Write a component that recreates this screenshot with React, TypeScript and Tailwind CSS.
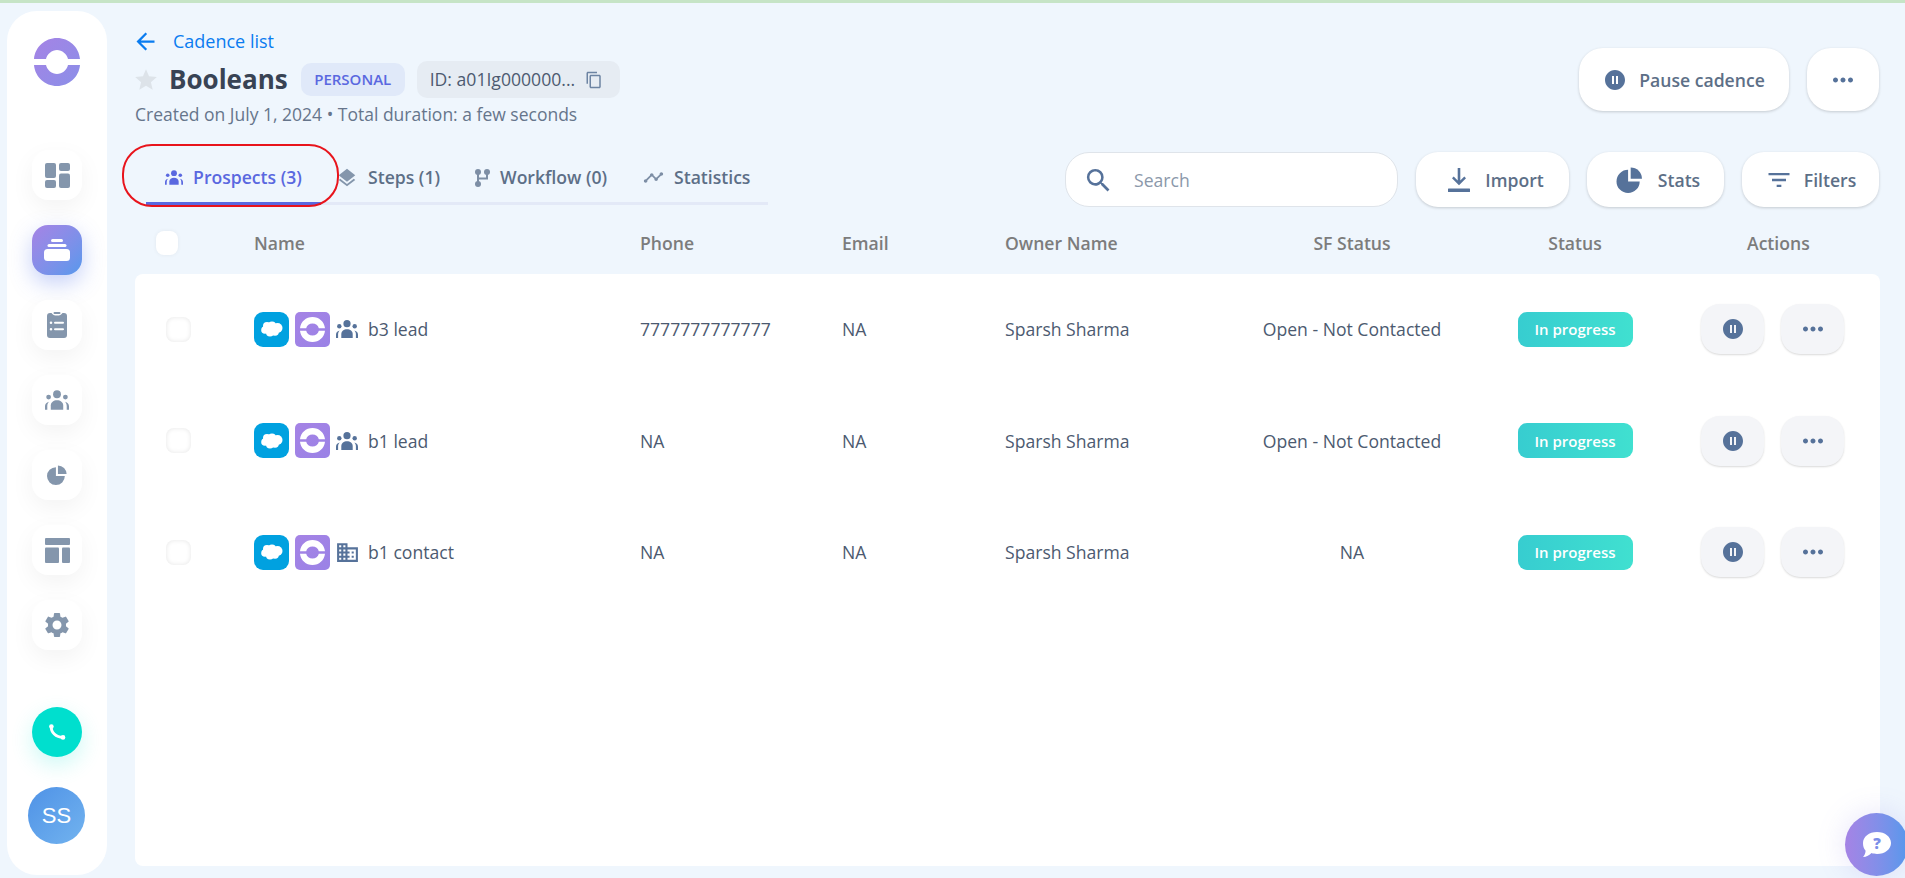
import type { ReactNode } from "react";
import {
  MdArrowBack,
  MdBusiness,
  MdContentCopy,
  MdFilterList,
  MdLayers,
  MdMoreHoriz,
  MdPauseCircleFilled,
  MdSearch,
  MdSettings,
  MdStar,
  MdTimeline,
} from "react-icons/md";

const tableCols = "grid grid-cols-[119px_386px_202px_163px_220px_254px_192px_209px]";

const prospects = [
  { name: "b3 lead", phone: "7777777777777", sfStatus: "Open - Not Contacted", type: "lead" },
  { name: "b1 lead", phone: "NA", sfStatus: "Open - Not Contacted", type: "lead" },
  { name: "b1 contact", phone: "NA", sfStatus: "NA", type: "contact" },
];

function Logo() {
  return (
    <svg width="46" height="48" viewBox="0 0 46 48">
      <defs>
        <linearGradient id="logoGrad" x1="0" y1="0" x2="1" y2="1">
          <stop offset="0" stopColor="#a583e5" />
          <stop offset="1" stopColor="#8b8fe8" />
        </linearGradient>
      </defs>
      <path
        fillRule="evenodd"
        fill="url(#logoGrad)"
        d="M0 21C1 9 11 0 23 0s22 9 23 21H34c-1-5-6-9-11-9s-10 4-11 9H0zM0 27h12c1 5 6 9 11 9s10-4 11-9h12c-1 12-11 21-23 21S1 39 0 27z"
      />
    </svg>
  );
}

function RowLogo() {
  return (
    <div className="flex h-[35px] w-[35px] items-center justify-center rounded-[5px] bg-linear-to-br from-[#a583e5] to-[#9a82e6]">
      <svg width="25" height="25" viewBox="0 0 25 25">
        <path
          fill="#fff"
          d="M0 11.300C.6 4.800 6 0 12.500 0S24.400 4.800 25 11.300h-6.200c-.6-2.800-3.200-4.800-6.300-4.800s-5.700 2-6.300 4.800H0zM0 13.700h6.200c.6 2.800 3.200 4.800 6.300 4.800s5.700-2 6.300-4.800H25C24.400 20.200 19 25 12.500 25S.6 20.200 0 13.700z"
        />
      </svg>
    </div>
  );
}

function SalesforceIcon() {
  return (
    <div className="flex h-[35px] w-[35px] items-center justify-center rounded-[9px] bg-[#00a1e0]">
      <svg width="22" height="16" viewBox="0 0 22 16" fill="#fff">
        <circle cx="6" cy="5" r="4" />
        <circle cx="11" cy="4.500" r="4" />
        <circle cx="16.500" cy="7" r="5" />
        <circle cx="4" cy="9" r="3.800" />
        <circle cx="9" cy="11.500" r="4" />
        <circle cx="14" cy="11" r="3.800" />
      </svg>
    </div>
  );
}

function PeopleIcon({ width, height, color }: { width: number; height: number; color: string }) {
  return (
    <svg width={width} height={height} viewBox="0 0 22 18" fill={color}>
      <circle cx="11" cy="3.700" r="3.600" />
      <circle cx="3.300" cy="6.300" r="2.200" />
      <circle cx="18.700" cy="6.300" r="2.200" />
      <path d="M5.300 18v-4c0-3 2.600-4.800 5.700-4.800s5.700 1.800 5.700 4.800v4H5.300z" />
      <path d="M0 18v-3.200c0-2 1.200-3.600 3.600-4.200-1 1.200-1.500 2.400-1.500 3.900V18H0z" />
      <path d="M22 18v-3.200c0-2-1.200-3.600-3.600-4.200 1 1.200 1.500 2.400 1.500 3.900V18H22z" />
    </svg>
  );
}

function PieIcon({ width, height, color }: { width: number; height: number; color: string }) {
  return (
    <svg width={width} height={height} viewBox="0 0 24 24" fill={color}>
      <path d="M10.700 2.600A10.700 10.700 0 1 0 21.400 13.300H10.700V2.600z" />
      <path d="M13.100 0.500A10.400 10.400 0 0 1 23.500 10.900H13.100V0.500z" />
    </svg>
  );
}

function DashboardIcon() {
  return (
    <svg width="25" height="25" viewBox="0 0 25 25" fill="#8496ac">
      <rect x="0" y="0" width="11" height="15" rx="2" />
      <rect x="0" y="17" width="11" height="8" rx="2" />
      <rect x="14" y="0" width="11" height="8" rx="2" />
      <rect x="14" y="10.500" width="11" height="14.500" rx="2" />
    </svg>
  );
}

function ClipboardIcon() {
  return (
    <svg width="20" height="26" viewBox="0 0 20 26" fill="#8496ac">
      <path
        fillRule="evenodd"
        d="M3 1h1.500c1 1.600 2.800 2.600 5.500 2.600S14.500 2.600 15.500 1H17a3 3 0 0 1 3 3v19a3 3 0 0 1-3 3H3a3 3 0 0 1-3-3V4a3 3 0 0 1 3-3zM4 9.500a1.300 1.300 0 1 0 0 2.600 1.300 1.300 0 0 0 0-2.600zm4 .3a1 1 0 0 0 0 2h8a1 1 0 0 0 0-2H8zM4 16a1.300 1.300 0 1 0 0 2.600A1.300 1.300 0 0 0 4 16zm4 .3a1 1 0 0 0 0 2h8a1 1 0 0 0 0-2H8z"
      />
      <rect x="6.500" y="0" width="7" height="2" rx="1" />
    </svg>
  );
}

function CadenceStackIcon() {
  return (
    <svg width="26" height="22" viewBox="0 0 26 22" fill="#fff">
      <rect x="7" y="0" width="12" height="3" rx="1.500" />
      <rect x="3.500" y="5" width="19" height="3" rx="1.500" />
      <rect x="0" y="10" width="26" height="12" rx="3.500" />
    </svg>
  );
}

function TemplatesIcon() {
  return (
    <svg width="25" height="25" viewBox="0 0 25 25" fill="#8496ac">
      <rect x="0" y="0" width="25" height="7" rx="1" />
      <rect x="0" y="9.500" width="14" height="15.500" rx="1" />
      <rect x="17" y="9.500" width="8" height="15.500" rx="1" />
    </svg>
  );
}

function PhoneIcon() {
  return (
    <svg width="18" height="16" viewBox="0 0 18 16" fill="#fff">
      <path d="M3.500 2.500C2.500 8 8 13.500 15 13.500" stroke="#fff" strokeWidth="2.800" fill="none" strokeLinecap="round" />
      <circle cx="3.400" cy="2.600" r="2.300" />
      <circle cx="15" cy="13.400" r="2.300" />
    </svg>
  );
}

function WorkflowIcon() {
  return (
    <svg width="15" height="18" viewBox="0 0 15 18" fill="#7d8ea5">
      <circle cx="3" cy="3" r="3" />
      <circle cx="3" cy="15" r="3" />
      <circle cx="12" cy="3" r="3" />
      <rect x="2" y="3" width="2" height="12" />
      <rect x="11" y="3" width="2" height="7" />
      <rect x="3" y="8.500" width="10" height="2" />
    </svg>
  );
}

function ImportIcon() {
  return (
    <svg width="22" height="24" viewBox="0 0 22 24" fill="#56729a">
      <path d="M9.700 0h2.600v12.500l4-4 1.700 1.700-7 7-7-7 1.700-1.700 4 4V0z" />
      <rect x="0" y="20.500" width="22" height="3.500" rx="0.500" />
    </svg>
  );
}

function ChatBubble() {
  return (
    <svg width="30" height="26" viewBox="0 0 30 26">
      <path fill="#fff" d="M15 0c8 0 14 4.800 14 11s-6 11-14 11c-2 0-4-.3-5.500-.9C7.500 23.500 4.500 25 1 25c1.500-1.500 2.500-3.700 2.600-6.300C1.700 16.700 1 14 1 11 1 4.800 7 0 15 0z" />
      <text x="15" y="17" textAnchor="middle" fontSize="15" fontWeight="800" fill="#7b8ee8" fontFamily="Open Sans, sans-serif">?</text>
    </svg>
  );
}

function NavButton({ children, active }: { children: ReactNode; active?: boolean }) {
  return (
    <div
      className={
        active
          ? "flex h-[50px] w-[50px] items-center justify-center rounded-[16px] bg-linear-to-br from-[#a583e5] to-[#5598ec] shadow-[0_8px_22px_rgba(90,120,235,0.35)]"
          : "flex h-[50px] w-[50px] items-center justify-center rounded-[16px] bg-white shadow-[0_8px_24px_rgba(0,0,0,0.05)]"
      }
    >
      {children}
    </div>
  );
}

function Sidebar() {
  return (
    <aside className="ml-[7px] mt-[8px] flex h-[864px] w-[100px] shrink-0 flex-col items-center rounded-[30px] bg-white pt-[27px]">
      <Logo />
      <nav className="mt-[64px] flex flex-col gap-[25px]">
        <NavButton>
          <DashboardIcon />
        </NavButton>
        <NavButton active>
          <CadenceStackIcon />
        </NavButton>
        <NavButton>
          <ClipboardIcon />
        </NavButton>
        <NavButton>
          <PeopleIcon width={24} height={20} color="#8496ac" />
        </NavButton>
        <NavButton>
          <PieIcon width={20} height={20} color="#8496ac" />
        </NavButton>
        <NavButton>
          <TemplatesIcon />
        </NavButton>
        <NavButton>
          <MdSettings size={30} color="#8496ac" />
        </NavButton>
      </nav>
      <div className="mt-[57px] flex h-[50px] w-[50px] items-center justify-center rounded-full bg-[#00dfce] shadow-[0_8px_22px_rgba(0,223,206,0.2)]">
        <PhoneIcon />
      </div>
      <div className="-ml-[1px] mt-[30px] flex h-[57px] w-[57px] items-center justify-center rounded-full bg-linear-to-br from-[#4f92e6] to-[#72b3ef] font-['Liberation_Sans',sans-serif] text-[22px] text-white">
        SS
      </div>
    </aside>
  );
}

function Tab({ icon, label, active, width }: { icon: ReactNode; label: string; active?: boolean; width: string }) {
  return (
    <div
      className={
        (active ? "border-[#5a68e0] text-[#5a68e0] " : "border-transparent text-[#5d6f87] ") +
        "-mb-[3px] flex h-[53px] items-center gap-[10px] border-b-[3px] pt-[1px] text-[17.600px] font-semibold " +
        width
      }
    >
      {icon}
      <span>{label}</span>
    </div>
  );
}

function ToolButton({ icon, label, width }: { icon: ReactNode; label: string; width: string }) {
  return (
    <button className={"flex h-[55px] items-center justify-center rounded-[22px] bg-white pt-[1px] text-[17.600px] font-semibold text-[#5d6f87] shadow-[0_1px_3px_rgba(0,0,0,0.18)] " + width}>
      {icon}
      {label}
    </button>
  );
}

function ProspectRow({ p }: { p: (typeof prospects)[number] }) {
  return (
    <div className={tableCols + " h-[111.500px] items-center text-[17.600px] text-[#4c5a70]"}>
      <div className="pl-[31px]">
        <div className="h-[25px] w-[25px] rounded-[8px] bg-white shadow-[inset_0_0_5px_rgba(0,0,0,0.1)]" />
      </div>
      <div className="flex items-center">
        <SalesforceIcon />
        <div className="ml-[6px]">
          <RowLogo />
        </div>
        <div className="ml-[6px] flex w-[32px] items-center">
          {p.type === "lead" ? (
            <PeopleIcon width={22} height={18} color="#56729a" />
          ) : (
            <MdBusiness size={25} color="#56729a" className="-ml-[1px]" />
          )}
        </div>
        <span>{p.name}</span>
      </div>
      <div>{p.phone}</div>
      <div>NA</div>
      <div>Sparsh Sharma</div>
      <div className="text-center">{p.sfStatus}</div>
      <div className="flex justify-center">
        <span className="flex h-[35px] w-[115px] items-center justify-center rounded-[9px] bg-linear-to-r from-[#37cdd0] to-[#40e0d0] text-[15px] font-semibold text-white">
          In progress
        </span>
      </div>
      <div className="flex gap-[17px] pl-[30px]">
        <button className="flex h-[50px] w-[63px] items-center justify-center rounded-[19px] bg-[#f4f5f8] shadow-[0_1px_2px_rgba(0,0,0,0.15)]">
          <MdPauseCircleFilled size={24} color="#56729a" />
        </button>
        <button className="flex h-[50px] w-[63px] items-center justify-center rounded-[19px] bg-[#f4f5f8] shadow-[0_1px_2px_rgba(0,0,0,0.15)]">
          <MdMoreHoriz size={30} color="#56729a" />
        </button>
      </div>
    </div>
  );
}

export default function App() {
  return (
    <div className="relative flex h-[878px] w-[1905px] flex-col overflow-hidden bg-[#eff6fd] font-['Open_Sans',sans-serif]">
      <div className="h-[3px] shrink-0 bg-[#c6e4c6]" />
      <div className="flex">
        <Sidebar />
        <main className="ml-[28px] flex w-[1745px] flex-col pt-[26px]">
          {/* header */}
          <div className="flex items-start justify-between pr-[1px]">
            <div>
              <div className="flex h-[24px] items-center gap-[14px] text-[18px] font-medium text-[#0a7cf0]">
                <MdArrowBack size={27} className="-ml-[3px]" />
                <span>Cadence list</span>
              </div>
              <div className="mt-[8px] flex h-[37px] items-center">
                <MdStar size={26} color="#dde3e9" className="-ml-[2px]" />
                <span className="ml-[10px] text-[26px] font-bold text-[#384354]">Booleans</span>
                <span className="ml-[13px] flex h-[33px] w-[104px] items-center justify-center rounded-[10px] bg-[#e0e9f9] text-[15px] font-semibold text-[#5a68e0]">
                  PERSONAL
                </span>
                <span className="ml-[12px] flex h-[37px] w-[203px] items-center gap-[10px] rounded-[10px] bg-[#e6ecf3] pl-[13px] text-[17.600px] text-[#4c5a70]">
                  ID: a01Ig000000...
                  <MdContentCopy size={18} color="#6d84a3" />
                </span>
              </div>
              <div className="mt-[5px] h-[22px] text-[17.500px] leading-[22px] text-[#66758b]">
                Created on July 1, 2024 • Total duration: a few seconds
              </div>
            </div>
            <div className="mt-[19px] flex gap-[18px]">
              <button className="flex h-[63px] w-[210px] items-center justify-center gap-[12px] rounded-[24px] bg-white pt-[1px] text-[17.600px] font-semibold text-[#5d6f87] shadow-[0_1px_3px_rgba(0,0,0,0.18)]">
                <MdPauseCircleFilled size={24} color="#56729a" />
                Pause cadence
              </button>
              <button className="flex h-[63px] w-[72px] items-center justify-center rounded-[24px] bg-white shadow-[0_1px_3px_rgba(0,0,0,0.18)]">
                <MdMoreHoriz size={30} color="#56729a" />
              </button>
            </div>
          </div>

          {/* tabs + toolbar */}
          <div className="mt-[27px] flex items-start justify-between pr-[1px]">
            <div className="ml-[11px] flex h-[53px] w-[622px] border-b-[3px] border-[#e3e9f7]">
              <Tab
                active
                width="w-[175px] justify-center"
                icon={<PeopleIcon width={18} height={15} color="#5a68e0" />}
                label="Prospects (3)"
              />
              <Tab width="ml-[15px] w-[139px]" icon={<MdLayers size={22} color="#8496ac" />} label="Steps (1)" />
              <Tab width="w-[168px]" icon={<WorkflowIcon />} label="Workflow (0)" />
              <Tab width="" icon={<MdTimeline size={21} color="#7d8ea5" />} label="Statistics" />
            </div>
            <div className="flex gap-[18px]">
              <div className="flex h-[55px] w-[333px] items-center rounded-[24px] border border-[#dfe4ea] bg-white pl-[17px] pt-[1px] text-[17.600px] text-[#8b98aa]">
                <MdSearch size={31} color="#56729a" />
                <span className="ml-[20px]">Search</span>
              </div>
              <ToolButton width="w-[153px] gap-[15px] pl-[7px]" icon={<ImportIcon />} label="Import" />
              <ToolButton width="w-[137px] gap-[15px] pl-[5px]" icon={<PieIcon width={27} height={26} color="#56729a" />} label="Stats" />
              <ToolButton width="w-[137px] gap-[11px]" icon={<MdFilterList size={28} color="#56729a" />} label="Filters" />
            </div>
          </div>

          {/* table */}
          <div className={tableCols + " h-[66.500px] items-center pt-[6px] text-[17.600px] font-semibold text-[#7c7c7c]"}>
            <div className="pl-[21px]">
              <div className="h-[24px] w-[22px] rounded-[8px] bg-white shadow-[0_0_4px_rgba(0,0,0,0.06)]" />
            </div>
            <div>Name</div>
            <div>Phone</div>
            <div>Email</div>
            <div>Owner Name</div>
            <div className="text-center">SF Status</div>
            <div className="text-center">Status</div>
            <div className="pl-[76px]">Actions</div>
          </div>
          <div className="h-[592.500px] rounded-[8px] bg-white">
            {prospects.map((p) => (
              <ProspectRow key={p.name} p={p} />
            ))}
          </div>
        </main>
      </div>

      {/* annotation drawn on the screenshot */}
      <div className="absolute left-[122px] top-[144px] h-[63px] w-[217px] rounded-[30px] border-2 border-[#e8141c]" />

      {/* help launcher */}
      <div className="absolute left-[1845px] top-[813px] flex h-[63px] w-[63px] items-center justify-center rounded-full bg-linear-to-r from-[#a583e5] to-[#5598ec] shadow-[0_0_30px_rgba(130,120,230,0.2)]">
        <ChatBubble />
      </div>
    </div>
  );
}
